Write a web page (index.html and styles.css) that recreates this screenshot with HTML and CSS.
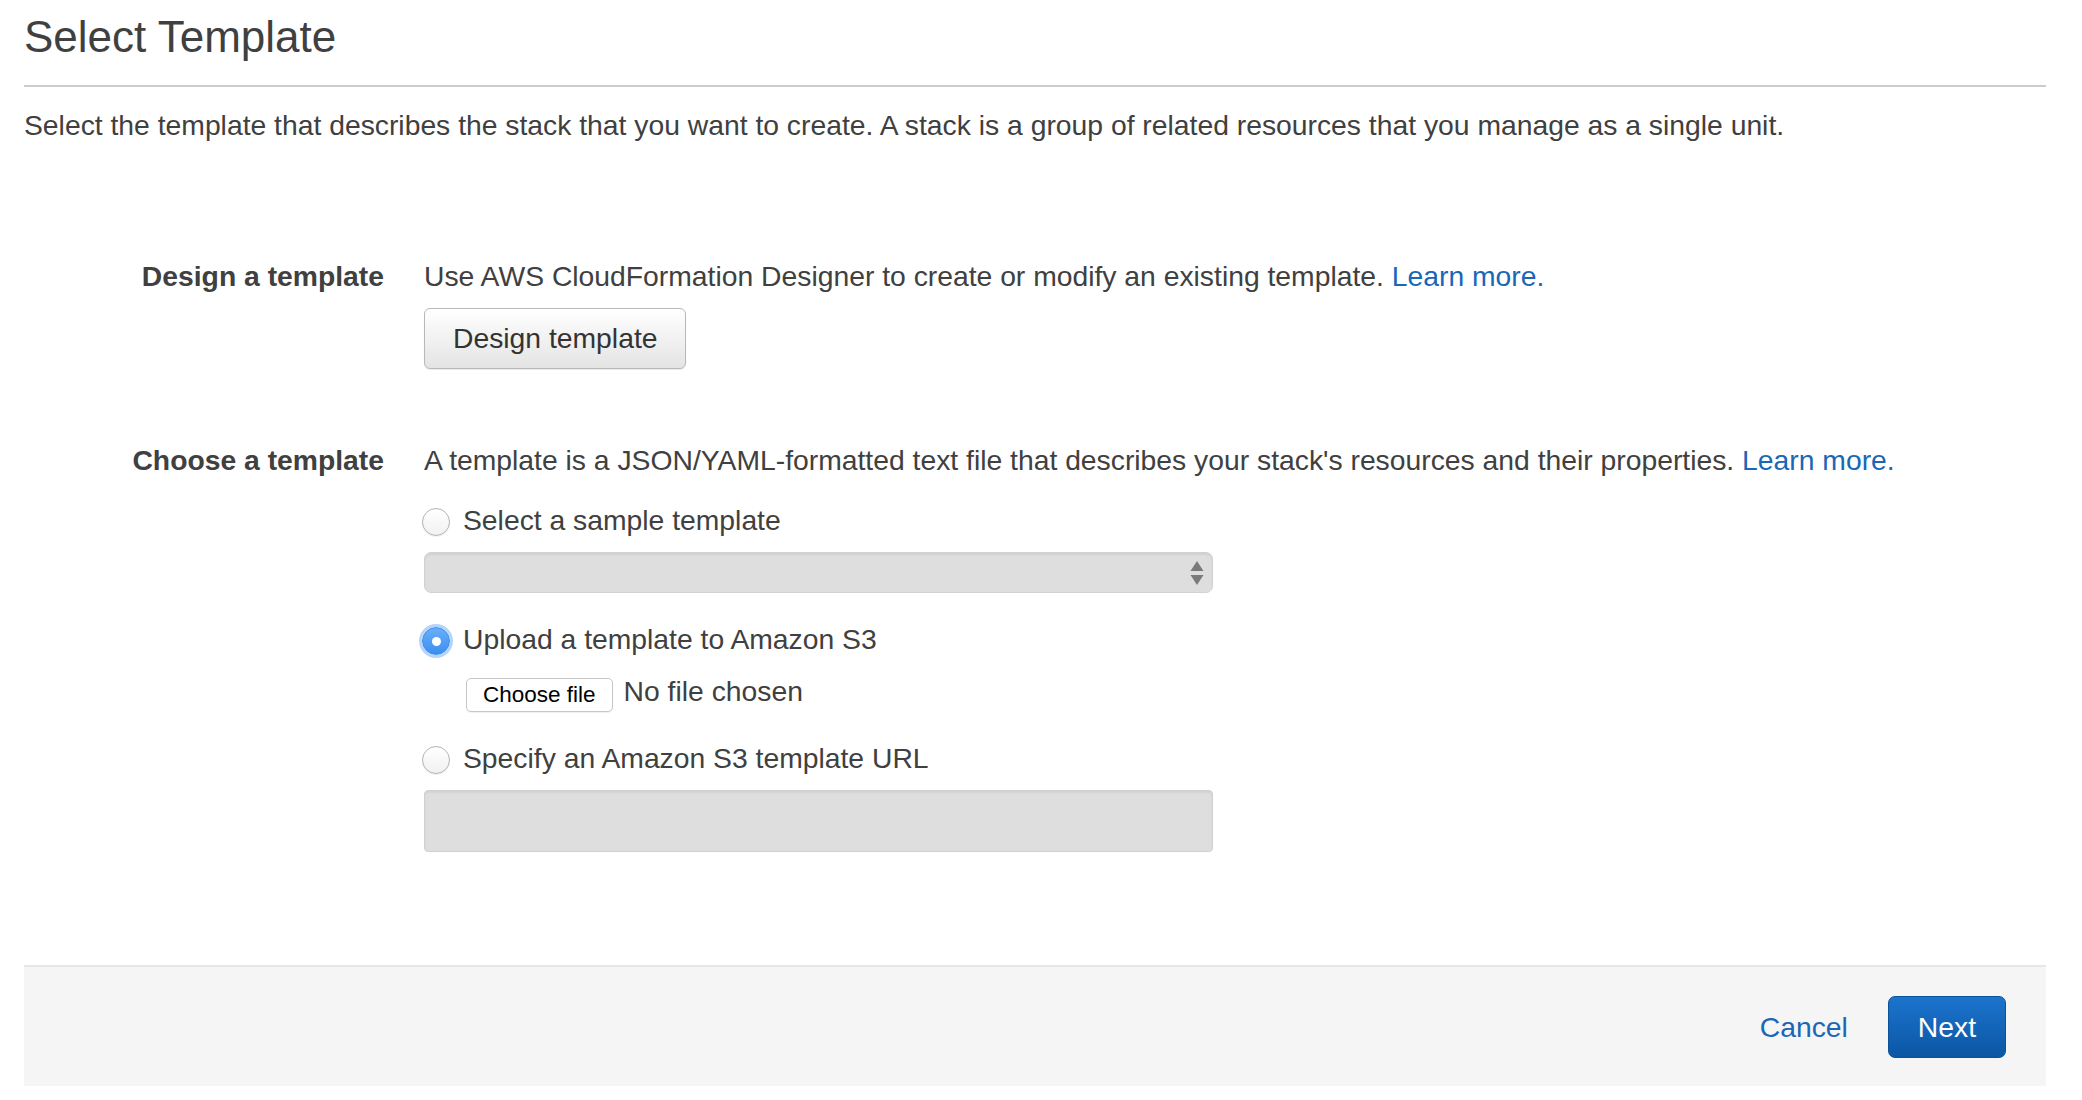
FILE: index.html
```html
<!DOCTYPE html>
<html lang="en">
<head>
<meta charset="utf-8">
<title>Select Template</title>
<link rel="stylesheet" href="styles.css">
</head>
<body>
<main class="page">
  <h1 class="title">Select Template</h1>
  <p class="intro">Select the template that describes the stack that you want to create. A stack is a group of related resources that you manage as a single unit.</p>

  <div class="form">
    <div class="row row-design">
      <div class="label">Design a template</div>
      <div class="field">
        <p class="help">Use AWS CloudFormation Designer to create or modify an existing template. <a class="link" href="#">Learn more.</a></p>
        <button class="btn" type="button">Design template</button>
      </div>
    </div>

    <div class="row row-choose">
      <div class="label">Choose a template</div>
      <div class="field">
        <p class="help">A template is a JSON/YAML-formatted text file that describes your stack's resources and their properties. <a class="link" href="#">Learn more.</a></p>

        <label class="option option-first">
          <span class="radio"></span>
          <span class="option-text">Select a sample template</span>
        </label>
        <div class="select">
          <svg class="arrows" width="14" height="26" viewBox="0 0 14 26">
            <path d="M7 1 L13.5 11 L0.5 11 Z" fill="#7a7a7a"/>
            <path d="M0.5 15 L13.5 15 L7 25 Z" fill="#7a7a7a"/>
          </svg>
        </div>

        <label class="option option-gap">
          <span class="radio radio-checked"><span class="dot"></span></span>
          <span class="option-text">Upload a template to Amazon S3</span>
        </label>
        <div class="file-row">
          <button class="file-btn" type="button">Choose file</button>
          <span class="file-name">No file chosen</span>
        </div>

        <label class="option option-gap">
          <span class="radio"></span>
          <span class="option-text">Specify an Amazon S3 template URL</span>
        </label>
        <div class="url-input"></div>
      </div>
    </div>
  </div>

  <footer class="footer">
    <a class="cancel" href="#">Cancel</a>
    <button class="next" type="button">Next</button>
  </footer>
</main>
</body>
</html>
```

FILE: styles.css
```css
* { box-sizing: border-box; }

html, body {
  margin: 0;
  padding: 0;
  background: #ffffff;
}

body {
  font-family: "Liberation Sans", Arial, sans-serif;
  color: #404040;
  font-size: 28.3px;
}

.page {
  padding: 0 36px 0 24px;
  width: 2082px;
}

.title {
  margin: 12px 0 0;
  font-size: 44px;
  font-weight: normal;
  line-height: 50px;
  color: #404040;
  padding-bottom: 23px;
  border-bottom: 2px solid #cccccc;
}

.intro {
  margin: 18px 0 0;
  line-height: 40px;
}

.form {
  margin-top: 111px;
}

.row {
  display: grid;
  grid-template-columns: 360px 1fr;
  column-gap: 40px;
}

.row-choose {
  margin-top: 71px;
}

.label {
  text-align: right;
  font-weight: bold;
  line-height: 40px;
  color: #404040;
}

.field {
  display: flex;
  flex-direction: column;
  align-items: flex-start;
}

.help {
  margin: 0;
  line-height: 40px;
}

.link {
  color: #1a67b8;
  text-decoration: none;
}

.btn {
  margin-top: 12px;
  height: 61px;
  padding: 0 28px;
  font-family: "Liberation Sans", Arial, sans-serif;
  font-size: 28.3px;
  color: #333333;
  border: 1px solid #b8b8b8;
  border-radius: 6px;
  background: linear-gradient(#ffffff, #e4e4e4);
  box-shadow: 0 1px 1px rgba(0, 0, 0, 0.08);
}

.option {
  display: flex;
  align-items: center;
  gap: 13px;
  line-height: 40px;
  margin-left: -2px;
}

.option-first {
  margin-top: 20px;
}

.option-gap {
  margin-top: 26px;
}

.radio {
  width: 28px;
  height: 28px;
  margin-top: 4px;
  border-radius: 50%;
  border: 1px solid #b3b3b3;
  background: linear-gradient(#ffffff, #f1f1f1);
  box-shadow: inset 0 1px 1px rgba(255, 255, 255, 0.8), 0 1px 1px rgba(0, 0, 0, 0.06);
  display: flex;
  align-items: center;
  justify-content: center;
  flex: none;
}

.radio-checked {
  border: 1px solid #3a8ef0;
  background: linear-gradient(#6aaef8, #3b8ff2);
  box-shadow: 0 0 0 3px rgba(120, 176, 245, 0.55);
}

.dot {
  width: 9px;
  height: 9px;
  border-radius: 50%;
  background: #ffffff;
}

.select {
  margin-top: 12px;
  width: 789px;
  height: 41px;
  border: 1px solid #d2d2d2;
  border-radius: 7px;
  background: #dedede;
  box-shadow: inset 0 2px 2px rgba(0, 0, 0, 0.06);
  display: flex;
  align-items: center;
  justify-content: flex-end;
  padding-right: 8px;
}

.arrows {
  display: block;
}

.file-row {
  margin-top: 19px;
  margin-left: 42px;
  display: flex;
  align-items: flex-start;
  gap: 11px;
}

.file-btn {
  height: 34px;
  padding: 0 16px;
  font-family: "Liberation Sans", Arial, sans-serif;
  font-size: 22.5px;
  color: #000000;
  background: #ffffff;
  border: 1px solid #c6c6c6;
  border-radius: 5px;
  box-shadow: 0 1px 1px rgba(0, 0, 0, 0.06);
}

.file-name {
  line-height: 26px;
  color: #404040;
}

.url-input {
  margin-top: 12px;
  width: 789px;
  height: 62px;
  border: 1px solid #d0d0d0;
  border-radius: 4px;
  background: #dedede;
  box-shadow: inset 0 2px 2px rgba(0, 0, 0, 0.05);
}

.footer {
  margin-top: 113px;
  border-top: 2px solid #e6e6e6;
  background: #f5f5f5;
  padding: 29px 40px 28px;
  display: flex;
  justify-content: flex-end;
  align-items: center;
  gap: 40px;
}

.cancel {
  color: #1a67b8;
  text-decoration: none;
  line-height: 40px;
}

.next {
  height: 62px;
  padding: 0 29px;
  font-family: "Liberation Sans", Arial, sans-serif;
  font-size: 28.3px;
  color: #ffffff;
  border: 1px solid #0b5299;
  border-radius: 7px;
  background: linear-gradient(#1c74cd, #0b56a4);
}
```
